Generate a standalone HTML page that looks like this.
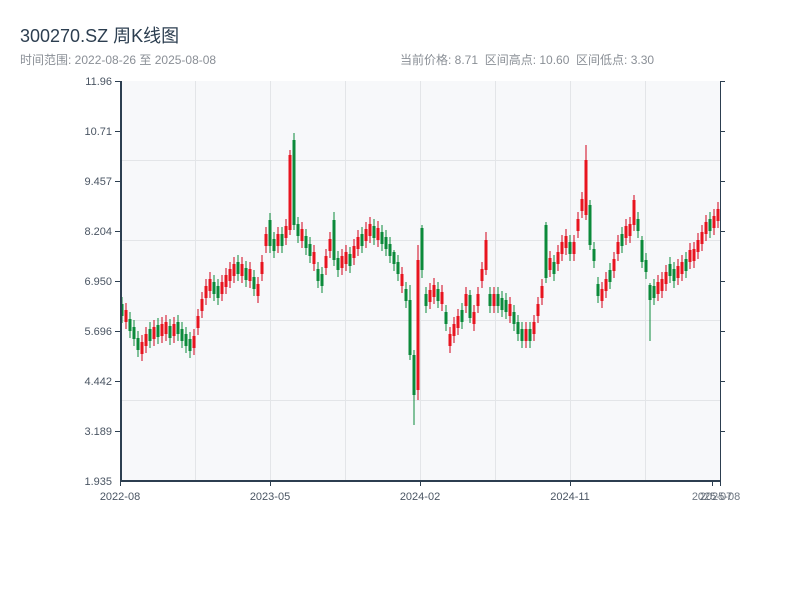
<!DOCTYPE html>
<html><head><meta charset="utf-8"><style>
body{margin:0;background:#fff;width:800px;height:600px;overflow:hidden;font-family:"Liberation Sans","Noto Sans CJK SC",sans-serif;}
.t{position:absolute;left:20px;top:22px;font-size:18px;color:#2c3e50;}
.s{position:absolute;top:51px;font-size:12px;color:#8a8f96;white-space:pre;}
</style></head><body>
<div class="t">300270.SZ 周K线图</div>
<div class="s" style="left:20px">时间范围: 2022-08-26 至 2025-08-08</div>
<div class="s" style="left:400px">当前价格: 8.71  区间高点: 10.60  区间低点: 3.30</div>
<svg width="800" height="600" style="position:absolute;left:0;top:0" xmlns="http://www.w3.org/2000/svg">
<rect x="121" y="81" width="599" height="400" fill="#f7f8fa"/>
<g stroke="#e3e5e8" stroke-width="1">
<line x1="195.5" y1="81" x2="195.5" y2="481"/><line x1="270.5" y1="81" x2="270.5" y2="481"/><line x1="345.5" y1="81" x2="345.5" y2="481"/><line x1="420.5" y1="81" x2="420.5" y2="481"/><line x1="495.5" y1="81" x2="495.5" y2="481"/><line x1="570.5" y1="81" x2="570.5" y2="481"/><line x1="645.5" y1="81" x2="645.5" y2="481"/>
<line x1="121" y1="160.5" x2="720" y2="160.5"/><line x1="121" y1="240.5" x2="720" y2="240.5"/><line x1="121" y1="320.5" x2="720" y2="320.5"/><line x1="121" y1="400.5" x2="720" y2="400.5"/>
</g>
<!-- red wicks -->
<path stroke="#d0021b" stroke-width="1" fill="none" d="M126 303V329M142 335V361M146 327V353M154 320V346M162 317V343M166 315V341M174 317V343M194 329V355M198 309V335M202 292V318M206 279V305M210 272V298M222 275V301M226 268V294M230 262V288M234 257V283M242 257V283M250 262V288M258 277V303M262 255V281M266 227V253M278 227V253M286 219V245M290 150V235M302 222V248M314 245V271M326 249V275M330 232V258M342 249V275M346 245V271M354 239V265M358 230V256M366 222V248M370 217V243M378 221V247M402 267V293M418 245V400M430 283V309M434 278V304M442 285V311M450 327V353M454 317V343M458 309V335M466 287V313M474 305V331M478 287V313M482 262V288M486 232V275M494 287V313M510 297V323M526 322V348M534 315V341M538 297V323M542 279V305M550 251V277M558 245V271M562 235V261M566 229V255M574 235V261M578 212V238M582 192V218M586 145V220M602 282V308M606 272V298M614 252V278M618 235V261M626 219V245M630 217V243M634 195V231M658 275V301M662 272V298M666 265V291M678 259V285M682 255V281M690 243V269M694 242V268M698 233V259M702 225V251M706 215V241M714 209V235M718 202V228"/>
<!-- red bodies -->
<path stroke="#e8141f" stroke-width="3" fill="none" d="M126 310V322M142 342V354M146 334V346M154 327V339M162 324V336M166 322V334M174 324V336M194 336V348M198 316V328M202 299V311M206 286V298M210 279V291M222 282V294M226 275V287M230 269V281M234 264V276M242 264V276M250 269V281M258 284V296M262 262V274M266 234V246M278 234V246M286 226V238M290 155V230M302 229V241M314 252V264M326 256V268M330 239V251M342 256V268M346 252V264M354 246V258M358 237V249M366 229V241M370 224V236M378 228V240M402 274V286M418 260V390M430 290V302M434 285V297M442 292V304M450 334V346M454 324V336M458 316V328M466 294V306M474 312V324M478 294V306M482 269V281M486 240V270M494 294V306M510 304V316M526 329V341M534 322V334M538 304V316M542 286V298M550 258V270M558 252V264M562 242V254M566 236V248M574 242V254M578 219V231M582 199V211M586 160V215M602 289V301M606 279V291M614 259V271M618 242V254M626 226V238M630 224V236M634 200V225M658 282V294M662 279V291M666 272V284M678 266V278M682 262V274M690 250V262M694 249V261M698 240V252M702 232V244M706 222V234M714 216V228M718 209V221"/>
<!-- green wicks -->
<path stroke="#0b8a3a" stroke-width="1" fill="none" d="M122 297V323M130 312V338M134 320V346M138 331V357M150 322V348M158 318V344M170 319V345M178 315V341M182 322V348M186 327V353M190 332V358M214 275V301M218 279V305M238 255V281M246 261V287M254 270V296M270 213V253M274 232V258M282 227V253M294 133V230M298 217V243M306 229V255M310 237V263M318 262V288M322 267V293M334 212V266M338 251V277M350 247V273M362 227V253M374 219V245M382 225V251M386 230V256M390 237V263M394 250V271M398 255V281M406 282V308M410 285V360M414 350V425M422 225V278M426 287V313M438 282V308M446 305V331M462 303V329M470 290V323M490 287V313M498 287V313M502 291V317M506 293V319M514 305V331M518 315V341M522 322V348M530 322V348M546 222V283M554 255V281M570 235V261M590 200V250M594 242V268M598 277V303M610 263V289M622 227V253M638 212V238M642 236V268M646 253V279M650 283V341M654 279V305M670 257V283M674 262V288M686 252V278M710 212V238"/>
<!-- green bodies -->
<path stroke="#0b8a3a" stroke-width="3" fill="none" d="M122 304V316M130 319V331M134 327V339M138 338V350M150 329V341M158 325V337M170 326V338M178 322V334M182 329V341M186 334V346M190 339V351M214 282V294M218 286V298M238 262V274M246 268V280M254 277V289M270 220V246M274 239V251M282 234V246M294 140V225M298 224V236M306 236V248M310 244V256M318 269V281M322 274V286M334 220V260M338 258V270M350 254V266M362 234V246M374 226V238M382 232V244M386 237V249M390 244V256M394 252V264M398 262V274M406 289V301M410 300V355M414 355V395M422 228V270M426 294V306M438 289V301M446 312V324M462 310V322M470 295V318M490 294V306M498 294V306M502 298V310M506 300V312M514 312V324M518 322V334M522 329V341M530 329V341M546 225V278M554 262V274M570 242V254M590 205V245M594 249V261M598 284V296M610 270V282M622 234V246M638 219V231M642 240V262M646 260V272M650 285V300M654 286V298M670 264V276M674 269V281M686 259V271M710 219V231"/>
<g stroke="#2c3e50">
<line x1="121" y1="81" x2="121" y2="482" stroke-width="2"/>
<line x1="120" y1="481" x2="721" y2="481" stroke-width="2"/>
<line x1="720.5" y1="81" x2="720.5" y2="481"/>
<line x1="115" y1="81.5" x2="121" y2="81.5"/><line x1="115" y1="131.5" x2="121" y2="131.5"/><line x1="115" y1="181.5" x2="121" y2="181.5"/><line x1="115" y1="231.5" x2="121" y2="231.5"/><line x1="115" y1="281.5" x2="121" y2="281.5"/><line x1="115" y1="331.5" x2="121" y2="331.5"/><line x1="115" y1="381.5" x2="121" y2="381.5"/><line x1="115" y1="431.5" x2="121" y2="431.5"/>
<line x1="720" y1="81.5" x2="725" y2="81.5"/><line x1="720" y1="131.5" x2="725" y2="131.5"/><line x1="720" y1="181.5" x2="725" y2="181.5"/><line x1="720" y1="231.5" x2="725" y2="231.5"/><line x1="720" y1="281.5" x2="725" y2="281.5"/><line x1="720" y1="331.5" x2="725" y2="331.5"/><line x1="720" y1="381.5" x2="725" y2="381.5"/><line x1="720" y1="431.5" x2="725" y2="431.5"/>
<line x1="120.5" y1="481" x2="120.5" y2="486"/><line x1="270.5" y1="481" x2="270.5" y2="486"/><line x1="420.5" y1="481" x2="420.5" y2="486"/><line x1="570.5" y1="481" x2="570.5" y2="486"/><line x1="712.5" y1="481" x2="712.5" y2="486"/><line x1="720.5" y1="481" x2="720.5" y2="486"/>
</g>
<g font-size="11" fill="#4a5563" text-anchor="end" font-family="Liberation Sans,sans-serif">
<text x="112" y="85">11.96</text><text x="112" y="135">10.71</text><text x="112" y="185">9.457</text><text x="112" y="235">8.204</text><text x="112" y="285">6.950</text><text x="112" y="335">5.696</text><text x="112" y="385">4.442</text><text x="112" y="435">3.189</text><text x="112" y="485">1.935</text>
</g>
<g font-size="11" fill="#4a5563" text-anchor="middle" font-family="Liberation Sans,sans-serif">
<text x="120" y="500">2022-08</text><text x="270" y="500">2023-05</text><text x="420" y="500">2024-02</text><text x="570" y="500">2024-11</text><text x="712" y="500" fill-opacity=".8">2025-07</text><text x="720" y="500" fill-opacity=".8">2025-08</text>
</g>
</svg>
</body></html>
